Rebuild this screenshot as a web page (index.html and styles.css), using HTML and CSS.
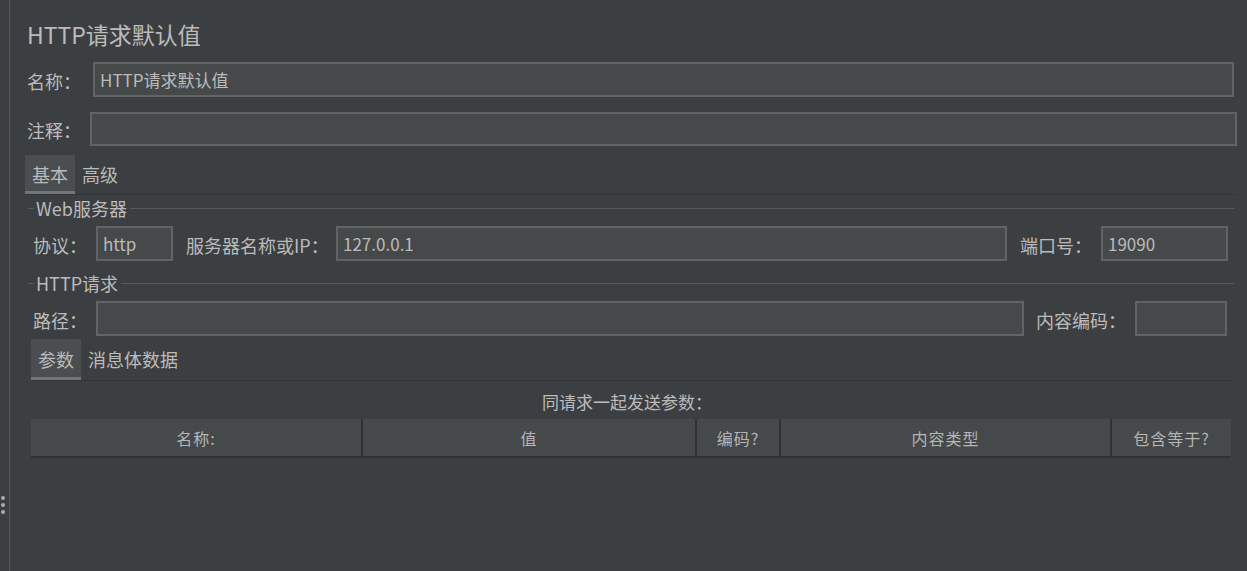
FILE: index.html
```html
<!DOCTYPE html>
<html lang="zh">
<head>
<meta charset="utf-8">
<title>HTTP请求默认值</title>
<link rel="stylesheet" href="styles.css">
</head>
<body>
<div class="app">
  <div class="gutter">
    <div class="grip"><span></span><span></span><span></span></div>
  </div>
  <div class="main">
    <div class="title">HTTP请求默认值</div>
    <div class="row row-name">
      <label class="lbl lbl-name">名称：</label>
      <div class="input input-name">HTTP请求默认值</div>
    </div>
    <div class="row row-comment">
      <label class="lbl lbl-comment">注释：</label>
      <div class="input input-comment"></div>
    </div>
    <div class="tabs tabs-top">
      <div class="tab active">基本</div>
      <div class="tab">高级</div>
    </div>

    <div class="group-head gh1"><span class="gh-lead"></span><span class="gh-text">Web服务器</span><span class="gh-line"></span></div>
    <div class="row row-server">
      <label class="lbl lbl-proto">协议：</label>
      <div class="input input-proto">http</div>
      <label class="lbl lbl-host">服务器名称或IP：</label>
      <div class="input input-host">127.0.0.1</div>
      <label class="lbl lbl-port">端口号：</label>
      <div class="input input-port">19090</div>
    </div>

    <div class="group-head gh2"><span class="gh-lead"></span><span class="gh-text">HTTP请求</span><span class="gh-line"></span></div>
    <div class="row row-path">
      <label class="lbl lbl-path">路径：</label>
      <div class="input input-path"></div>
      <label class="lbl lbl-enc">内容编码：</label>
      <div class="input input-enc"></div>
    </div>

    <div class="tabs tabs-params">
      <div class="tab active">参数</div>
      <div class="tab">消息体数据</div>
    </div>
    <div class="caption">同请求一起发送参数：</div>
    <div class="table-head">
      <div class="th">名称:</div>
      <div class="th">值</div>
      <div class="th">编码?</div>
      <div class="th">内容类型</div>
      <div class="th">包含等于?</div>
    </div>
  </div>
</div>
</body>
</html>
```
FILE: styles.css
```css
html, body {
  margin: 0;
  padding: 0;
  background: #3c3f41;
  height: 100%;
}
body {
  font-family: "Noto Sans CJK SC", "Noto Sans", sans-serif;
  color: #bbbbbb;
  font-size: 18px;
  overflow: hidden;
}
.app {
  display: flex;
  height: 571px;
}
.gutter {
  width: 9px;
  border-right: 1px solid #56595b;
  display: flex;
  align-items: flex-start;
}
.grip {
  margin-top: 496px;
  margin-left: 1px;
  display: flex;
  flex-direction: column;
  gap: 3px;
}
.grip span {
  display: block;
  width: 4px;
  height: 4px;
  border-radius: 2px;
  background: #a9abad;
}
.main {
  flex: 1;
  display: flex;
  flex-direction: column;
}
.title {
  margin-top: 18px;
  margin-left: 17px;
  height: 32px;
  line-height: 32px;
  font-size: 23px;
}
.row {
  display: flex;
  align-items: center;
}
.lbl {
  flex: none;
  line-height: 22px;
  white-space: nowrap;
  padding-top: 2px;
}
.input {
  box-sizing: border-box;
  height: 35px;
  background: #45494a;
  border: 2px solid #616465;
  padding: 0 5px;
  line-height: 31px;
  font-size: 17px;
  color: #bbbbbb;
  white-space: nowrap;
  overflow: hidden;
}
.row-name { margin-top: 12px; margin-left: 17px; margin-right: 13px; }
.lbl-name { width: 66px; }
.input-name { flex: 1; }
.row-comment { margin-top: 15px; margin-left: 17px; margin-right: 10px; }
.lbl-comment { width: 63px; }
.input-comment { flex: 1; height: 34px; }

.tabs {
  display: flex;
  border-bottom: 1px solid #333638;
}
.tab {
  box-sizing: border-box;
  padding: 0 7px;
  line-height: 38px;
  height: 39px;
  border-bottom: 3px solid transparent;
}
.tab.active {
  background: #4b4e50;
  border-bottom-color: #737679;
}
.tabs-top { margin-top: 9px; margin-left: 15px; margin-right: 10px; }

.group-head {
  display: flex;
  align-items: center;
  height: 26px;
  margin-left: 18px;
  margin-right: 13px;
}
.gh-lead {
  width: 6px;
  height: 1px;
  background: #57595b;
}
.gh-text {
  padding: 0 3px 0 2px;
  font-size: 18px;
  line-height: 26px;
}
.gh-line {
  flex: 1;
  height: 1px;
  background: #57595b;
}
.gh2 { margin-top: 9px; }

.row-server { margin-top: 5px; margin-left: 23px; margin-right: 19px; }
.lbl-proto { width: 63px; }
.input-proto { width: 77px; }
.lbl-host { width: 150px; margin-left: 13px; }
.input-host { flex: 1; }
.lbl-port { width: 81px; margin-left: 13px; }
.input-port { width: 127px; }

.row-path { margin-top: 5px; margin-left: 23px; margin-right: 20px; }
.lbl-path { width: 63px; }
.input-path { flex: 1; }
.lbl-enc { width: 99px; margin-left: 12px; }
.input-enc { width: 92px; }

.tabs-params { margin-top: 3px; margin-left: 21px; margin-right: 16px; }
.tabs-params .tab { height: 41px; line-height: 40px; }

.caption {
  margin-top: 8px;
  margin-left: 21px;
  margin-right: 16px;
  text-align: center;
  font-size: 17px;
  line-height: 26px;
  padding-right: 8px;
}
.table-head {
  margin-top: 4px;
  margin-left: 21px;
  margin-right: 16px;
  display: grid;
  grid-template-columns: 330px 332px 82px 329px 1fr;
  column-gap: 2px;
  background: #2f3133;
  border-bottom: 2px solid #2f3133;
}
.th {
  background: #45494a;
  height: 37px;
  line-height: 38px;
  font-size: 16px;
  letter-spacing: 1px;
  text-align: center;
  color: #b4b6b8;
}
```
